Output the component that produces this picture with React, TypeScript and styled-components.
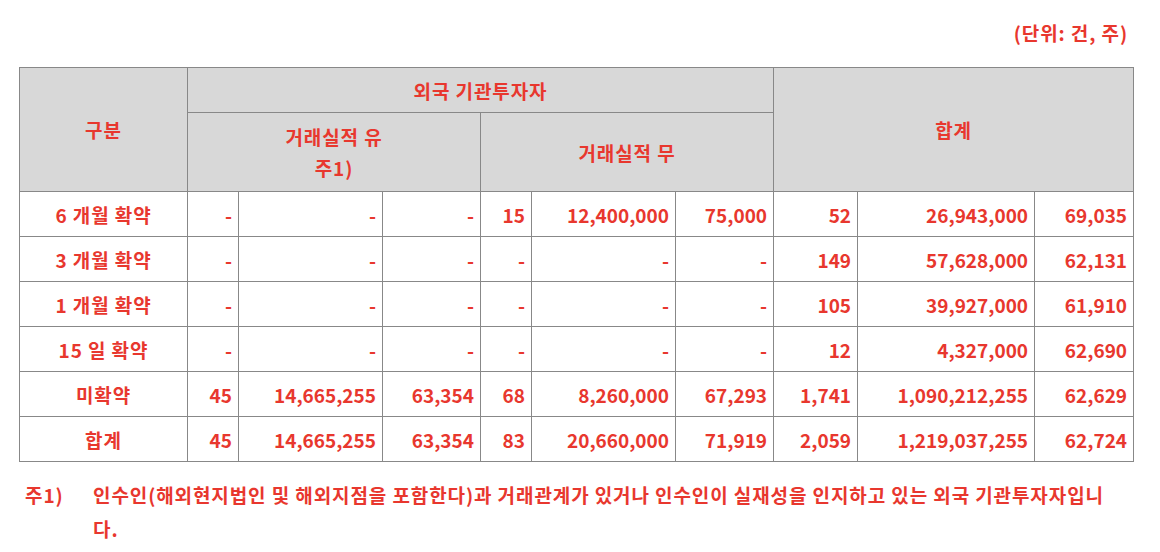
import React from "react";
import styled, { createGlobalStyle } from "styled-components";

const Global = createGlobalStyle`
  html, body { margin: 0; padding: 0; background: #fff; }
  body { font-family: "Noto Sans CJK KR", "Noto Sans", sans-serif; }
`;

const RED = "#e8372e";
const HANGUL_SPACING = "0.9px";

const Page = styled.div`
  width: 1160px;
  box-sizing: border-box;
  padding: 19px 27px 0 19px;
  color: ${RED};
  font-weight: 700;
  font-size: 19px;
`;

const Unit = styled.div`
  text-align: right;
  padding-right: 5px;
  line-height: 28px;
  margin-bottom: 20px;
  letter-spacing: ${HANGUL_SPACING};
`;

const Table = styled.table`
  width: 1114px;
  border-collapse: collapse;
  table-layout: fixed;
  border: 1px solid #000;
`;

const Th = styled.th<{ $h?: number }>`
  background: #d8d8d8;
  border: 1px solid #888;
  font-weight: 700;
  text-align: center;
  vertical-align: middle;
  padding: 0;
  height: ${(p) => p.$h ?? 44}px;
  line-height: 31px;
  letter-spacing: ${HANGUL_SPACING};
`;

const Td = styled.td<{ $label?: boolean }>`
  border: 1px solid #888;
  height: 44px;
  padding: 0 ${(p) => (p.$label ? 0 : 6)}px 0 0;
  text-align: ${(p) => (p.$label ? "center" : "right")};
  letter-spacing: ${(p) => (p.$label ? HANGUL_SPACING : "0")};
  vertical-align: middle;
  white-space: nowrap;
`;

const Note = styled.div`
  display: flex;
  margin-top: 16px;
  line-height: 34px;
  padding-left: 6px;
  letter-spacing: ${HANGUL_SPACING};
`;

const NoteLabel = styled.div`
  flex: 0 0 68px;
`;

const NoteText = styled.div`
  flex: 1;
  padding-right: 15px;
`;

const widths = [168, 51, 144, 98, 51, 144, 98, 84, 177, 99];

const rows: string[][] = [
  ["6 개월 확약", "-", "-", "-", "15", "12,400,000", "75,000", "52", "26,943,000", "69,035"],
  ["3 개월 확약", "-", "-", "-", "-", "-", "-", "149", "57,628,000", "62,131"],
  ["1 개월 확약", "-", "-", "-", "-", "-", "-", "105", "39,927,000", "61,910"],
  ["15 일 확약", "-", "-", "-", "-", "-", "-", "12", "4,327,000", "62,690"],
  ["미확약", "45", "14,665,255", "63,354", "68", "8,260,000", "67,293", "1,741", "1,090,212,255", "62,629"],
  ["합계", "45", "14,665,255", "63,354", "83", "20,660,000", "71,919", "2,059", "1,219,037,255", "62,724"],
];

export default function App() {
  return (
    <Page>
      <Global />
      <Unit>(단위: 건, 주)</Unit>
      <Table>
        <colgroup>
          {widths.map((w, i) => (
            <col key={i} style={{ width: w }} />
          ))}
        </colgroup>
        <thead>
          <tr>
            <Th rowSpan={2}>구분</Th>
            <Th colSpan={6} $h={44}>외국 기관투자자</Th>
            <Th rowSpan={2} colSpan={3}>합계</Th>
          </tr>
          <tr>
            <Th colSpan={3} $h={78}>
              거래실적 유<br />주1)
            </Th>
            <Th colSpan={3} $h={78}>거래실적 무</Th>
          </tr>
        </thead>
        <tbody>
          {rows.map((r, i) => (
            <tr key={i}>
              {r.map((c, j) => (
                <Td key={j} $label={j === 0}>
                  {c}
                </Td>
              ))}
            </tr>
          ))}
        </tbody>
      </Table>
      <Note>
        <NoteLabel>주1)</NoteLabel>
        <NoteText>
          인수인(해외현지법인 및 해외지점을 포함한다)과 거래관계가 있거나 인수인이 실재성을 인지하고 있는 외국 기관투자자입니다.
        </NoteText>
      </Note>
    </Page>
  );
}
